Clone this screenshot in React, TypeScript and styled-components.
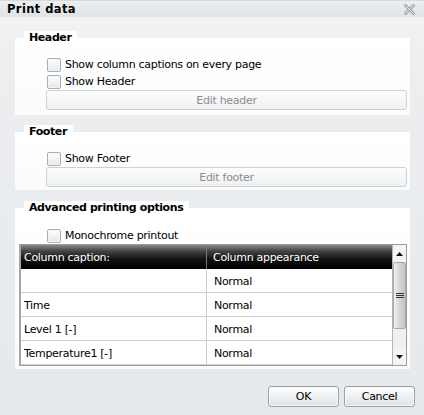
import React from "react";
import styled, { createGlobalStyle } from "styled-components";

const Global = createGlobalStyle`
  html, body { margin: 0; padding: 0; background: #eceef0; }
  body { font-family: "DejaVu Sans", Verdana, sans-serif; font-size: 11px; letter-spacing: -0.3px; color: #000; }
  * { box-sizing: border-box; }
`;

const Window = styled.div`
  width: 424px;
  height: 415px;
  display: flex;
  flex-direction: column;
  background: linear-gradient(#f3f4f6, #eceef0 60px, #e6e9ec);
  overflow: hidden;
`;

const TitleBar = styled.div`
  height: 17px;
  display: flex;
  align-items: center;
  justify-content: space-between;
  padding: 0 9px 0 7px;
  background: linear-gradient(#eceef0, #e0e3e6);
  border-top: 1px solid #d7dadd;
  font-weight: bold;
  font-size: 11.5px;
  letter-spacing: 0.4px;
`;

const Content = styled.div`
  display: flex;
  flex-direction: column;
  padding: 14px 14px 0 15px;
`;

const Group = styled.div<{ $gap: number }>`
  display: flex;
  flex-direction: column;
  margin-top: ${(p) => p.$gap}px;
`;

const Legend = styled.div`
  position: relative;
  z-index: 1;
  align-self: flex-start;
  height: 14px;
  line-height: 14px;
  margin: 0 0 -7px 9px;
  padding: 0 6px 0 5px;
  background: #fff;
  font-weight: bold;
  letter-spacing: -0.4px;
`;

const Panel = styled.div<{ $top: number; $bottom: number }>`
  display: flex;
  flex-direction: column;
  padding: ${(p) => p.$top}px 3px ${(p) => p.$bottom}px 4px;
  background: linear-gradient(#ffffff, #fafbfb);
`;

const CheckRow = styled.label`
  display: flex;
  align-items: flex-start;
  gap: 4px;
  height: 15px;
  margin-left: 28px;
  line-height: 14px;
  white-space: nowrap;
  & + & {
    margin-top: 2px;
  }
`;

const Box = styled.span`
  width: 14px;
  height: 14px;
  border: 1px solid #a8afb7;
  border-radius: 2px;
  background: linear-gradient(#ffffff, #e4e7ea);
  box-shadow: inset 0 0 0 1px #f4f6f8;
  flex-shrink: 0;
`;

const WideButton = styled.div`
  height: 20px;
  margin-left: 27px;
  display: flex;
  align-items: center;
  justify-content: center;
  border: 1px solid #cdd1d5;
  border-radius: 3px;
  background: linear-gradient(#fdfdfd, #eef0f2);
  color: #8c8c8c;
`;

const Table = styled.div`
  display: flex;
  height: 122px;
  border: 1px solid #9c9c9c;
  border-left: 2px solid #a6a6a6;
  background: #fff;
`;

const Grid = styled.div`
  flex: 1;
  display: grid;
  grid-template-columns: 185px 1fr;
  grid-auto-rows: 24px;
  align-content: start;
`;

const HeadCell = styled.div<{ $divider?: boolean }>`
  height: 24px;
  display: flex;
  align-items: center;
  padding-left: ${(p) => (p.$divider ? 6 : 3)}px;
  color: #fff;
  background: linear-gradient(#8a8a8a, #444 25%, #111 60%, #000);
  border-left: ${(p) => (p.$divider ? "1px solid #777" : "none")};
`;

const Cell = styled.div<{ $divider?: boolean }>`
  display: flex;
  align-items: center;
  padding-left: ${(p) => (p.$divider ? 7 : 3)}px;
  border-bottom: 1px solid #cfcfcf;
  border-left: ${(p) => (p.$divider ? "1px solid #cfcfcf" : "none")};
  padding-top: 1px;
`;

const Scrollbar = styled.div`
  width: 14px;
  display: flex;
  flex-direction: column;
  border-left: 1px solid #b5b5b5;
  background: #efefef;
`;

const Arrow = styled.div`
  height: 17px;
  display: flex;
  align-items: center;
  justify-content: center;
  background: #f4f4f4;
`;

const Track = styled.div`
  flex: 1;
  display: flex;
  flex-direction: column;
`;

const Thumb = styled.div`
  height: 67px;
  display: flex;
  align-items: center;
  justify-content: center;
  border: 1px solid #a9a9a9;
  border-radius: 2px;
  background: linear-gradient(90deg, #f2f2f2, #d6d6d6 50%, #c4c4c4);
`;

const Grip = styled.div`
  width: 8px;
  height: 5px;
  border-top: 1px solid #333;
  border-bottom: 1px solid #333;
  position: relative;
  &::after {
    content: "";
    position: absolute;
    left: 0;
    right: 0;
    top: 1px;
    border-top: 1px solid #333;
  }
`;

const Footer = styled.div`
  display: flex;
  justify-content: flex-end;
  gap: 5px;
  padding: 17px 9px 0 0;
`;

const DialogButton = styled.div`
  width: 71px;
  height: 21px;
  display: flex;
  align-items: center;
  justify-content: center;
  border: 1px solid #9aa1a8;
  border-radius: 3px;
  background: linear-gradient(#ffffff, #eceef0 55%, #dfe2e5);
  box-shadow: inset 0 0 0 1px #f8f9fa;
`;

const CloseIcon = () => (
  <svg width="11" height="11" viewBox="0 0 11 11">
    <path d="M1.5 1.5 L9.5 9.5 M9.5 1.5 L1.5 9.5" stroke="#9da3a9" strokeWidth="3" strokeLinecap="square" />
    <path d="M1.5 1.5 L9.5 9.5 M9.5 1.5 L1.5 9.5" stroke="#eef0f2" strokeWidth="1" strokeLinecap="square" />
  </svg>
);

const UpArrow = () => (
  <svg width="7" height="4" viewBox="0 0 7 4">
    <path d="M0 4 L3.5 0 L7 4 Z" fill="#111" />
  </svg>
);

const DownArrow = () => (
  <svg width="7" height="4" viewBox="0 0 7 4">
    <path d="M0 0 L3.5 4 L7 0 Z" fill="#111" />
  </svg>
);

const Check = ({ label }: { label: string }) => (
  <CheckRow>
    <Box />
    <span>{label}</span>
  </CheckRow>
);

const rows = [
  ["", "Normal"],
  ["Time", "Normal"],
  ["Level 1 [-]", "Normal"],
  ["Temperature1 [-]", "Normal"],
];

export default function App() {
  return (
    <>
      <Global />
      <Window>
        <TitleBar>
          <span>Print data</span>
          <CloseIcon />
        </TitleBar>
        <Content>
          <Group $gap={0}>
            <Legend>Header</Legend>
            <Panel $top={20} $bottom={5}>
              <Check label="Show column captions on every page" />
              <Check label="Show Header" />
              <WideButton>Edit header</WideButton>
            </Panel>
          </Group>
          <Group $gap={10}>
            <Legend>Footer</Legend>
            <Panel $top={20} $bottom={3}>
              <Check label="Show Footer" />
              <WideButton>Edit footer</WideButton>
            </Panel>
          </Group>
          <Group $gap={11}>
            <Legend>Advanced printing options</Legend>
            <Panel $top={21} $bottom={3}>
              <Check label="Monochrome printout" />
              <Table>
                <Grid>
                  <HeadCell>Column caption:</HeadCell>
                  <HeadCell $divider>Column appearance</HeadCell>
                  {rows.map(([a, b], i) => (
                    <React.Fragment key={i}>
                      <Cell>{a}</Cell>
                      <Cell $divider>{b}</Cell>
                    </React.Fragment>
                  ))}
                </Grid>
                <Scrollbar>
                  <Arrow>
                    <UpArrow />
                  </Arrow>
                  <Track>
                    <Thumb>
                      <Grip />
                    </Thumb>
                  </Track>
                  <Arrow>
                    <DownArrow />
                  </Arrow>
                </Scrollbar>
              </Table>
            </Panel>
          </Group>
        </Content>
        <Footer>
          <DialogButton>OK</DialogButton>
          <DialogButton>Cancel</DialogButton>
        </Footer>
      </Window>
    </>
  );
}
